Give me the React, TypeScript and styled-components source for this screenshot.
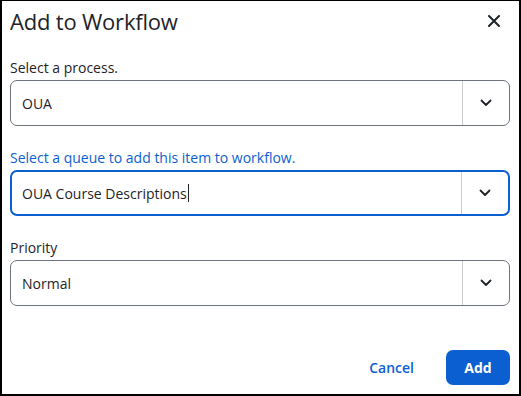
import styled, { createGlobalStyle } from 'styled-components';

const GlobalStyle = createGlobalStyle`
  html, body {
    margin: 0;
    padding: 0;
    background: #ffffff;
  }
  body {
    font-family: "Open Sans", "Noto Sans", sans-serif;
    color: #1f2328;
  }
`;

const BLUE = '#0b5fd0';

type SelectProps = {
    label: string;
    value: string;
    focused?: boolean;
    caret?: boolean;
};

const Chevron = () => (
    <svg width="12" height="8" viewBox="0 0 12 8" fill="none">
        <path d="M1.5 1.5 L6 6 L10.5 1.5" stroke="#1f2328" strokeWidth="1.8" strokeLinecap="round" strokeLinejoin="round" />
    </svg>
);

const CloseIcon = () => (
    <svg width="12" height="12" viewBox="0 0 12 12" fill="none">
        <path d="M1 1 L11 11 M11 1 L1 11" stroke="#1f2328" strokeWidth="2" strokeLinecap="round" />
    </svg>
);

const SelectField = ({ label, value, focused, caret }: SelectProps) => (
    <Field>
        <Label $focused={focused}>{label}</Label>
        <SelectBox $focused={focused}>
            <Value $focused={focused}>
                {value}
                {caret && <Caret />}
            </Value>
            <Toggle>
                <Chevron />
            </Toggle>
        </SelectBox>
    </Field>
);

const App = () => {
    return (
        <>
            <GlobalStyle />
            <Dialog>
                <Header>
                    <Title>Add to Workflow</Title>
                    <CloseButton aria-label="Close">
                        <CloseIcon />
                    </CloseButton>
                </Header>
                <Body>
                    <SelectField label="Select a process." value="OUA" />
                    <SelectField label="Select a queue to add this item to workflow." value="OUA Course Descriptions" focused caret />
                    <SelectField label="Priority" value="Normal" />
                </Body>
                <Footer>
                    <LinkButton>Cancel</LinkButton>
                    <PrimaryButton>Add</PrimaryButton>
                </Footer>
            </Dialog>
        </>
    );
};

const Dialog = styled.div`
  box-sizing: border-box;
  width: 521px;
  height: 396px;
  border: 2px solid #000;
  border-top-width: 1px;
  background: #fff;
  display: flex;
  flex-direction: column;
  padding: 0 9px 0 8px;
`;

const Header = styled.div`
  height: 40px;
  display: flex;
  align-items: center;
  justify-content: space-between;
`;

const Title = styled.h1`
  margin: 0;
  font-size: 22px;
  font-weight: 400;
  color: #1f2328;
  letter-spacing: -0.2px;
`;

const CloseButton = styled.button`
  border: none;
  background: transparent;
  padding: 0;
  width: 24px;
  height: 24px;
  display: flex;
  align-items: center;
  justify-content: center;
  margin-right: 4px;
  cursor: pointer;
`;

const Body = styled.div`
  display: flex;
  flex-direction: column;
  gap: 22px;
  padding-top: 17px;
`;

const Field = styled.div`
  display: flex;
  flex-direction: column;
  gap: 2px;
`;

const Label = styled.label<{ $focused?: boolean }>`
  font-size: 14px;
  line-height: 20px;
  color: ${(p) => (p.$focused ? BLUE : '#1f2328')};
`;

const SelectBox = styled.div<{ $focused?: boolean }>`
  box-sizing: border-box;
  height: 46px;
  display: flex;
  align-items: stretch;
  border: ${(p) => (p.$focused ? `2px solid ${BLUE}` : '1px solid #6e747c')};
  border-radius: 7px;
  background: #fff;
`;

const Value = styled.div<{ $focused?: boolean }>`
  flex: 1;
  display: flex;
  align-items: center;
  padding-left: ${(p) => (p.$focused ? '10px' : '11px')};
  font-size: 14px;
  color: #1f2328;
`;

const Caret = styled.span`
  display: inline-block;
  width: 1px;
  height: 18px;
  background: #1f2328;
  margin-left: 1px;
`;

const Toggle = styled.div`
  width: 46px;
  border-left: 1px solid #c9cccf;
  display: flex;
  align-items: center;
  justify-content: center;
`;

const Footer = styled.div`
  margin-top: auto;
  margin-bottom: 9px;
  display: flex;
  justify-content: flex-end;
  align-items: center;
  gap: 10px;
`;

const LinkButton = styled.button`
  border: none;
  background: transparent;
  color: ${BLUE};
  font-family: "Open Sans", "Noto Sans", sans-serif;
  font-size: 14px;
  font-weight: 600;
  padding: 0 22px;
  height: 35px;
  cursor: pointer;
`;

const PrimaryButton = styled.button`
  border: none;
  background: ${BLUE};
  color: #fff;
  font-family: "Open Sans", "Noto Sans", sans-serif;
  font-size: 14px;
  font-weight: 700;
  width: 64px;
  height: 35px;
  border-radius: 7px;
  cursor: pointer;
`;

export default App;
